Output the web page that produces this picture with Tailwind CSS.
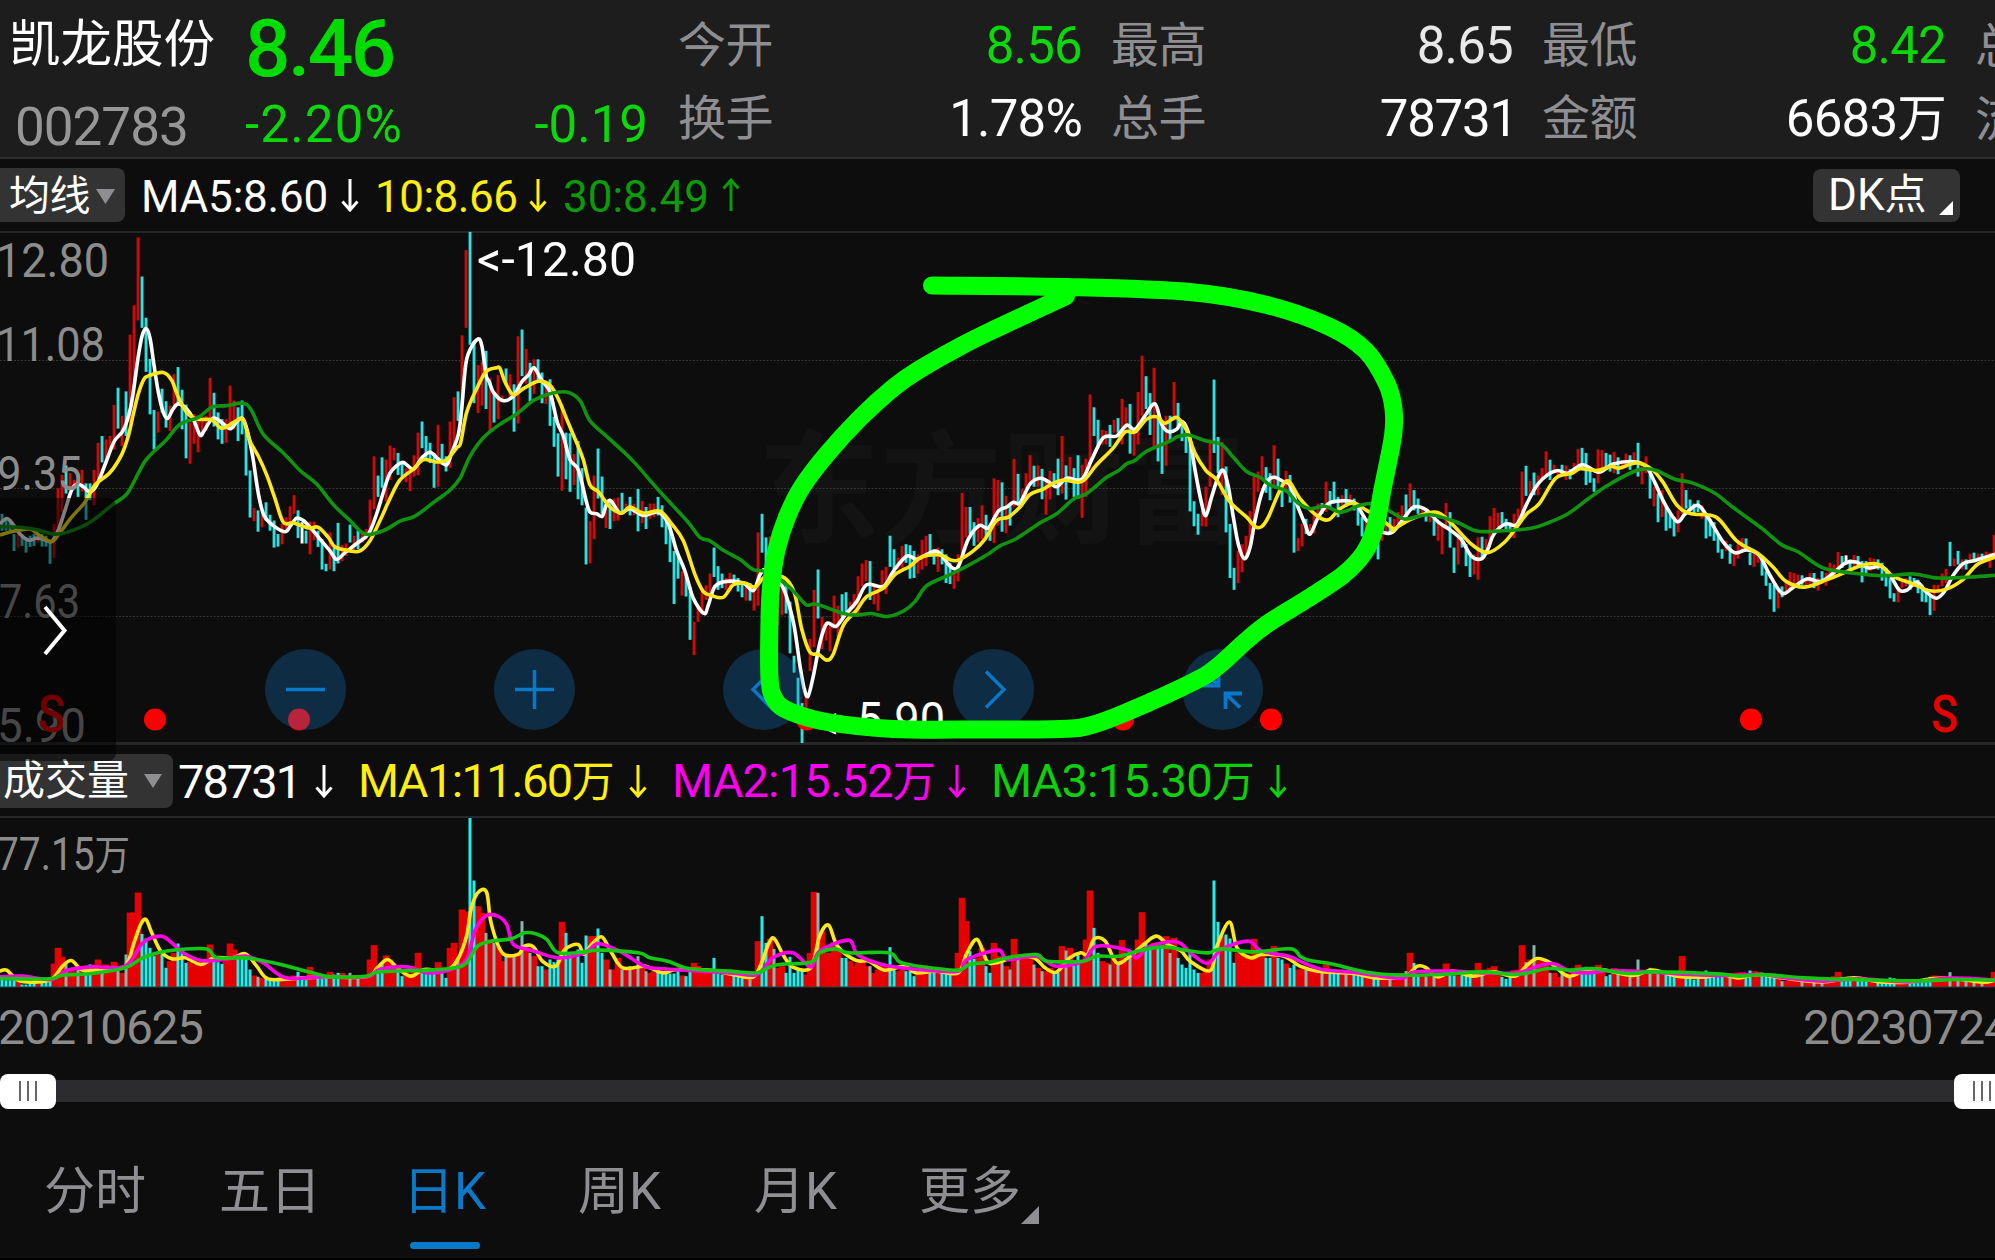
<!DOCTYPE html>
<html lang="zh-CN">
<head>
<meta charset="utf-8">
<title>凯龙股份 002783</title>
<script src="https://cdn.jsdelivr.net/npm/@tailwindcss/browser@4"></script>
</head>
<body class="w-[1995px] h-[1260px] overflow-hidden bg-[#0d0d0d] font-[Roboto,'Noto_Sans_CJK_SC',sans-serif] text-white">
<svg class="hidden">
  <symbol id="down" viewBox="0 0 18 34"><path d="M9 1V31M1.5 23.5L9 32L16.5 23.5" fill="none" stroke="currentColor" stroke-width="3"/></symbol>
  <symbol id="up" viewBox="0 0 18 34"><path d="M9 33V3M1.5 10.5L9 2L16.5 10.5" fill="none" stroke="currentColor" stroke-width="3"/></symbol>
</svg>
<div class="relative flex h-[1260px] w-[1995px] flex-col overflow-hidden border-b-2 border-black whitespace-nowrap">

  <!-- quote header -->
  <header class="flex h-[159px] shrink-0 overflow-hidden border-b-2 border-[#2e2e2e] bg-[#1d1d1d]">
    <div class="w-[676px] shrink-0">
      <div class="flex h-[90px] items-center">
        <div class="w-[245px] pl-[9px] text-[51.5px] leading-[92px]">凯龙股份</div>
        <div class="pt-[8px] text-[80px] font-medium leading-[82px] tracking-[-2.5px] text-[#00dc00]">8.46</div>
      </div>
      <div class="flex h-[68px] items-center text-[51px] leading-[68px]">
        <div class="w-[245px] pl-[15px] pt-[6px] text-[53px] tracking-[-1px] text-[#969696]">002783</div>
        <div class="w-[200px] pt-[2px] tracking-[1.2px] text-[#0bd80b]">-2.20%</div>
        <div class="w-[203px] pt-[2px] text-right text-[#0bd80b]">-0.19</div>
      </div>
    </div>
    <div class="grid h-[156px] shrink-0 grid-cols-[434px_431px_434px_200px] grid-rows-[88px_68px] text-[51px] tracking-[-0.8px]">
      <div class="flex justify-between pr-[28px] leading-[92px]"><span class="text-[48px] tracking-[-0.5px] text-[#8e8e93] pl-[2px]">今开</span><span class="text-[#0bd80b]">8.56</span></div>
      <div class="flex justify-between pr-[28px] leading-[92px]"><span class="text-[48px] tracking-[-0.5px] text-[#8e8e93] pl-[1px]">最高</span><span class="text-[#e8e8e8]">8.65</span></div>
      <div class="flex justify-between pr-[29px] leading-[92px]"><span class="text-[48px] tracking-[-0.5px] text-[#8e8e93] pl-[1px]">最低</span><span class="text-[#0bd80b]">8.42</span></div>
      <div class="leading-[92px]"><span class="text-[48px] tracking-[-0.5px] text-[#8e8e93]">总值</span></div>
      <div class="flex justify-between pr-[28px] leading-[62px]"><span class="text-[48px] tracking-[-0.5px] text-[#8e8e93] pl-[2px]">换手</span><span>1.78%</span></div>
      <div class="flex justify-between pr-[24px] leading-[62px]"><span class="text-[48px] tracking-[-0.5px] text-[#8e8e93] pl-[1px]">总手</span><span class="tracking-[-1.2px]">78731</span></div>
      <div class="flex justify-between pr-[29px] leading-[62px]"><span class="text-[48px] tracking-[-0.5px] text-[#8e8e93] pl-[1px]">金额</span><span>6683<span class="text-[49.5px]">万</span></span></div>
      <div class="leading-[62px]"><span class="text-[48px] tracking-[-0.5px] text-[#8e8e93]">流值</span></div>
    </div>
  </header>

  <!-- moving average bar -->
  <div class="flex h-[72px] shrink-0 items-center text-[44px] leading-[54px]">
    <div class="flex h-[54px] w-[125px] items-center gap-[6px] rounded-r-lg bg-[#333] pl-[9px] pt-[2px] text-[41px] tracking-[-0.5px]">均线
      <svg class="h-[15px] w-[19px]" viewBox="0 0 19 15"><path d="M0 0H19L9.500 15Z" fill="#8e8e93"/></svg></div>
    <div class="ml-[16px] w-[200px] pt-[3px] tracking-[-0.2px]">MA5:8.60</div><svg class="h-[34px] w-[18px]"><use href="#down"/></svg>
    <div class="ml-[16px] w-[154px] pt-[3px] tracking-[-0.5px] text-[#ffee10]">10:8.66</div><svg class="h-[34px] w-[18px] text-[#ffee10]"><use href="#down"/></svg>
    <div class="ml-[16px] w-[159px] pt-[3px] text-[#0a9a0a]">30:8.49</div><svg class="h-[34px] w-[18px] text-[#0a9a0a]"><use href="#up"/></svg>
    <div class="ml-auto mr-[35px] flex h-[53px] w-[147px] items-center rounded-lg bg-[#333] pl-[15px] text-[44px]">DK<span class="text-[42px]">点</span>
      <svg class="mt-[26px] ml-auto mr-[7px] h-[14px] w-[14px]" viewBox="0 0 14 14"><path d="M14 0V14H0Z" fill="#fff"/></svg></div>
  </div>

  <!-- price chart -->
  <div class="relative h-[512px] shrink-0">
    <svg id="price" class="block h-[512px] w-[1995px]" viewBox="0 231 1995 512">
      <text x="758" y="533" font-size="122" font-weight="700" fill="#131313" font-family="Noto Sans CJK SC">东方财富</text>
      <path d="M0 232H1995M0 743H1995" stroke="#262626" stroke-width="2"/>
      <path d="M0 360.500H1995M0 488.500H1995M0 616.500H1995" stroke="#363636" stroke-width="1" stroke-dasharray="2 1.500"/>
      <g id="candles"></g>
      <g id="averages" fill="none" stroke-width="3.600" stroke-linejoin="round"></g>
      <g font-family="Roboto" font-size="48">
        <g fill="#8c8c8c">
          <text x="-4" y="277" textLength="113" lengthAdjust="spacingAndGlyphs">12.80</text>
          <text x="-4" y="361" textLength="109" lengthAdjust="spacingAndGlyphs">11.08</text>
          <text x="-3" y="490" textLength="85" lengthAdjust="spacingAndGlyphs">9.35</text>
          <text x="-1" y="618" textLength="81" lengthAdjust="spacingAndGlyphs">7.63</text>
          <text x="-3" y="742" textLength="89" lengthAdjust="spacingAndGlyphs">5.90</text>
        </g>
        <g fill="#fff">
          <text x="477" y="275.500" textLength="159" lengthAdjust="spacingAndGlyphs">&lt;-12.80</text>
          <text y="736"><tspan x="815" dy="3">&lt;-</tspan><tspan x="857" dy="-3" textLength="88" lengthAdjust="spacingAndGlyphs">5.90</tspan></text>
        </g>
        <g fill="#e60000" font-size="51" font-weight="500">
          <text x="38" y="732" textLength="27" lengthAdjust="spacingAndGlyphs">S</text>
          <text x="1931" y="732" textLength="27" lengthAdjust="spacingAndGlyphs">S</text>
        </g>
      </g>
      <g fill="#f00"><circle cx="155" cy="719.500" r="11"/><circle cx="299" cy="719.500" r="11"/><circle cx="807" cy="719.500" r="11"/><circle cx="1123" cy="719.500" r="11"/><circle cx="1271" cy="719.500" r="11"/><circle cx="1751" cy="719.500" r="11"/></g>
    </svg>
    <div class="absolute top-[418px] left-[265px] flex gap-[148.2px] text-[#0a78c8]">
      <button class="size-[81px] rounded-full bg-[#1076c4]/30"><svg viewBox="0 0 81 81" fill="none" stroke="currentColor" stroke-width="3.500"><path d="M21 40.500H60"/></svg></button>
      <button class="size-[81px] rounded-full bg-[#1076c4]/30"><svg viewBox="0 0 81 81" fill="none" stroke="currentColor" stroke-width="3.500"><path d="M21 40.500H60M40.500 21V60"/></svg></button>
      <button class="size-[81px] rounded-full bg-[#1076c4]/30"><svg viewBox="0 0 81 81" fill="none" stroke="currentColor" stroke-width="3.500"><path d="M48 22.500L30 40.500L48 58.500"/></svg></button>
      <button class="size-[81px] rounded-full bg-[#1076c4]/30"><svg viewBox="0 0 81 81" fill="none" stroke="currentColor" stroke-width="3.500"><path d="M33 22.500L51 40.500L33 58.500"/></svg></button>
      <button class="size-[81px] rounded-full bg-[#1076c4]/30"><svg viewBox="0 0 81 81" fill="none" stroke="currentColor" stroke-width="3.800"><path d="M21 36.500H36.500V21M36.500 36.500L21 21M60 44.500H43.500V60M43.500 44.500L58 58.500"/></svg></button>
    </div>
    <svg class="absolute inset-0 h-[512px] w-[1995px]" viewBox="0 231 1995 512"><path id="marker" fill="none" stroke="#0f0" stroke-width="18" stroke-linecap="round" stroke-linejoin="round"/></svg>
  </div>

  <!-- volume header -->
  <div class="flex h-[75px] shrink-0 items-center border-y-2 border-[#262626] text-[47px] leading-[54px]">
    <div class="flex h-[54px] w-[173px] items-center gap-[15px] rounded-r-lg bg-[#333] pl-[3px] text-[42px]">成交量
      <svg class="h-[14px] w-[18px]" viewBox="0 0 18 14"><path d="M0 0H18L9 14Z" fill="#8e8e93"/></svg></div>
    <div class="ml-[5px] w-[137px] pt-[2px] tracking-[-2px]">78731</div><svg class="h-[34px] w-[18px]"><use href="#down"/></svg>
    <div class="ml-[25px] w-[271px] pt-[2px] tracking-[-1.6px] text-[#ffee10]">MA1:11.60<span class="text-[43px]">万</span></div><svg class="h-[34px] w-[18px] text-[#ffee10]"><use href="#down"/></svg>
    <div class="ml-[25px] w-[276px] pt-[2px] tracking-[-0.8px] text-[#ff00f0]">MA2:15.52<span class="text-[43px]">万</span></div><svg class="h-[34px] w-[18px] text-[#ff00f0]"><use href="#down"/></svg>
    <div class="ml-[25px] w-[278px] pt-[2px] tracking-[-0.8px] text-[#0bd00b]">MA3:15.30<span class="text-[43px]">万</span></div><svg class="h-[34px] w-[18px] text-[#0bd00b]"><use href="#down"/></svg>
  </div>

  <!-- volume chart -->
  <svg class="block h-[171px] w-[1995px] shrink-0" viewBox="0 818.500 1995 171">
    <path d="M0 987H1995" stroke="#0f4a4a" stroke-width="2"/>
    <g id="volumes"></g>
    <g id="volumeAverages" fill="none" stroke-width="3.600" stroke-linejoin="round"></g>
    <text x="-3" y="870" font-family="Roboto, Noto Sans CJK SC" font-size="46" fill="#8c8c8c" textLength="133" lengthAdjust="spacingAndGlyphs">77.15<tspan font-size="42">万</tspan></text>
  </svg>

  <!-- date range -->
  <div class="flex h-[84px] shrink-0 justify-between text-[48px] leading-[77px] tracking-[-1.4px] text-[#8c8c8c]">
    <span class="-ml-[2px]">20210625</span><span class="-mr-[15px] tracking-[-1.1px]">20230724</span>
  </div>
  <div class="flex h-[36px] shrink-0 items-center">
    <div class="flex h-[35px] w-[56px] shrink-0 items-center justify-center gap-[6px] rounded-lg bg-white"><i class="h-[20px] w-[2px] bg-[#666]"></i><i class="h-[20px] w-[2px] bg-[#666]"></i><i class="h-[20px] w-[2px] bg-[#666]"></i></div>
    <div class="h-[22px] w-[1898px] shrink-0 bg-[#2c2c2e]"></div>
    <div class="flex h-[35px] w-[56px] shrink-0 items-center justify-center gap-[6px] rounded-lg bg-white"><i class="h-[20px] w-[2px] bg-[#666]"></i><i class="h-[20px] w-[2px] bg-[#666]"></i><i class="h-[20px] w-[2px] bg-[#666]"></i></div>
  </div>

  <!-- period tabs -->
  <nav class="flex h-[149px] shrink-0 pl-[44px] text-[51px] leading-[165px] text-[#8e8e93]">
    <span class="w-[175px]">分时</span>
    <span class="w-[184px]">五日</span>
    <span class="relative w-[175px] text-[#0a7ac8]">日K<i class="absolute top-[133px] left-[7px] h-[7px] w-[70px] rounded-full bg-[#0a7ac8]"></i></span>
    <span class="w-[176px]">周K</span>
    <span class="w-[165px]">月K</span>
    <span class="flex">更多<svg class="mt-[97px] h-[18px] w-[18px]" viewBox="0 0 18 18"><path d="M18 0V18H0Z" fill="#8e8e93"/></svg></span>
  </nav>

  <!-- drawer handle -->
  <div class="absolute top-[498px] left-0 h-[263px] w-[116px] rounded-r-lg bg-black/50">
    <svg class="h-full w-full" viewBox="0 498 116 263"><path d="M45 607L64.500 630.500L45 654" fill="none" stroke="#fff" stroke-width="4"/></svg>
  </div>
</div>

<script>
// One entry per trading day: colour code, then high and low in chart units.
const DAYS = `c870-920 c885-920 c885-925 c930-980 r930-970 c930-965 c940-985 c935-968 c930-965 r935-955 c930-967 c935-967 c955-1018 r900-1000 r795-925 r755-865 c727-810 r750-800 r770-800 c765-820 r740-805 c780-888 c780-830 r740-845 r660-780 c640-718 r650-720 r640-690 r548-680 c497-618 r580-670 c508-640 r340-600 r253-520 r52-298 c168-320 c290-450 c412-576 c563-680 r568-630
c500-570 c537-615 r550-625 r457-550 c436-540 c503-620 c547-706 r600-722 r575-663 r580-688 r590-640 r580-625 r468-590 c512-612 c570-650 c590-663 r590-660 r491-615 r535-620 c555-655 c535-635 c610-757 c742-881 r853-892 c860-923 r870-910 c836-890 c873-920 c890-970 c930-967 r900-960 r880-915 r848-900 r815-870 c860-942 w895-958 c920-958 r893-990 r893-948 c920-968
c945-1035 c1018-1040 r925-1035 c970-1040 c897-1017 r962-1010 r958-995 c902-955 r935-985 c920-975 r925-955 r915-945 r828-930 r700-857 c757-820 c703-793 r710-833 r668-770 r675-712 c690-755 c720-760 r735-777 r735-803 r697-760 r630-756 c597-676 c640-710 c660-720 c690-793 r607-790 c663-725 c700-745 r597-735 r525-690 c508-595 r342-560 r90-320 c36-370 c360-543 r430-572
r420-550 c388-560 r468-625 c510-600 r460-590 r520-540 c440-490 r457-530 c487-627 r345-603 c325-463 r382-485 c423-537 r413-515 c413-480 c452-543 r475-545 c472-610 c583-672 c632-760 r545-802 c630-768 c632-805 r693-785 c655-827 c735-845 c852-1020 r892-1017 r757-945 c677-825 c760-870 r830-912 c832-915 r825-892 r822-890 c808-870 r840-865 c820-875 r840-875 c797-922
r832-898 c850-915 r840-885 r840-880 c820-875 c845-910 c880-960 c910-1013 c980-1137 c990-1062 r1040-1112 c1050-1115 c1085-1243 r1190-1288 r1145-1190 r1090-1165 r1082-1125 r1047-1110 c970-1057 c1025-1095 c1047-1090 r1060-1095 r1045-1100 c1050-1080 c1060-1100 c1075-1117 r1075-1127 c1075-1127 r1080-1157 r925-1142 c870-985 c940-1050 r937-1060 c1000-1090 r1090-1200 r1080-1170 c1075-1165 c1130-1283 c1290-1340 c1355-1440
c1430-1552 r1405-1480 r1240-1335 r1095-1265 c1035-1180 r1175-1270 r1190-1245 r1190-1277 r1112-1210 r1142-1235 c1108-1175 c1102-1165 r1130-1170 r1108-1150 r1055-1175 r1017-1085 r1007-1070 c1010-1125 r1085-1138 r1095-1157 r1037-1090 r1027-1107 c935-1027 c975-1045 r1000-1035 r965-1030 c960-1015 c963-1062 c980-1060 r990-1047 r947-1035 r935-1025 c930-995 c975-1020 r970-1042 c975-1020 c990-1075 c1015-1078 r1040-1092 r990-1070
r808-995 r850-940 c850-930 c895-965 r883-955 r845-945 c873-940 c910-950 r765-957 r770-905 c777-923 r817-928 c840-905 r708-850 c752-840 r797-850 r750-825 r697-785 c728-790 r727-790 c737-827 r775-873 r743-827 c750-790 c707-815 r640-810 c727-828 r702-770 c735-820 c697-825 r725-882 r707-820 r517-735 c555-640 c592-675 r622-665 r625-665 c607-672 r592-630 c587-630
r530-665 r555-620 c545-692 r625-698 r510-665 r402-580 c463-560 c513-637 r438-672 c580-715 c595-752 r580-728 c580-655 r480-595 c542-620 c595-655 c630-690 c650-863 c833-907 c870-932 r860-907 r790-908 r650-790 c473-690 c643-750 r657-815 c730-925 c900-1060 c1030-1095 r980-1075 r960-1043 r935-1000 r862-970 r755-905 r745-805 r700-770 c732-808 c750-830 r667-795 c707-790
c780-850 r743-800 c755-837 c815-985 r942-980 r900-967 c885-930 r900-935 r865-928 r840-880 c838-870 r775-865 c803-850 c775-840 c820-880 r815-845 c797-850 r813-845 c825-860 c850-905 c880-937 r890-920 r890-930 c920-970 c960-1005 r920-950 r900-930 c880-925 r885-910 r865-900 r845-890 c813-880 r780-850 c800-860 c825-870 r850-880 c860-893 r865-895 c885-935 r890-950
r905-990 r838-915 c865-970 c970-1045 r940-1020 c940-970 c960-1025 c985-1057 r990-1050 r940-1065 c938-1000 r945-990 r877-960 r853-930 r867-910 c865-900 c885-915 c895-925 r870-942 r855-900 r745-870 c728-817 r773-820 c748-815 r757-815 r735-775 r685-765 c710-770 r725-750 r740-760 c725-755 r727-770 c738-768 r720-750 r678-740 c675-735 c690-785 c740-778 c765-805 r680-780
r682-745 c690-740 c695-745 r687-750 c703-753 r712-740 r692-735 c697-740 r688-725 c660-760 r720-783 r700-750 c740-825 r790-848 c810-895 r800-880 c850-920 c870-913 c880-937 r860-925 r750-870 c800-855 c828-860 c840-870 c830-865 r845-885 c870-943 c885-937 c895-950 c930-985 c975-1003 r950-980 c960-1018 r980-1025 r960-1003 r942-985 c943-975 c985-1022 r985-1027 r985-1015
c995-1053 c1040-1083 c1075-1123 c1080-1160 r1090-1150 c1085-1117 r1075-1105 r1042-1095 r1045-1085 r1050-1075 c1052-1080 r1060-1085 r1045-1080 c1045-1090 r1060-1097 c1040-1075 r1045-1083 r1015-1060 r1020-1055 r983-1035 c995-1030 w993-1020 c1005-1035 r992-1030 c995-1030 c1010-1073 c1010-1050 r1000-1040 r1003-1035 c1005-1035 c1015-1068 c1030-1085 c1060-1120 c1105-1130 r1085-1132 r1065-1090 r1060-1085 c1055-1095 c1060-1085 c1065-1105
c1080-1130 c1090-1132 c1110-1170 r1080-1157 r1080-1105 r1047-1085 r1033-1075 c953-1025 r1003-1025 c980-1020 r1005-1035 c1005-1035 r988-1015 c985-1012 r988-1008 c988-1010 r982-1005 r985-1030 r932-1005`.trim().split(/\s+/);

// Volume bar tops; "@n" jumps to day n and the gap is interpolated.
const VOLUMES = `720 722 722 722 715 735 735 725 715 715 728 728 725 672 625 652 672 690 695 690 685 690 675 675 660 680 675 680 667 690 700 645 519 519 459 583 597 625 650 645 645 685 665 640 612 640 670 667 675 675 665 660 615 660 668 673 655 612 630 650 645 645 690 708 712 715 710 718 722 715 715 715 712 708 697 710 722 682 710 718 718 710 697 705 700 700 712 700 708 712 712 710 660 617 680 672 648 660 680 680 710 690 705 680 640 695 700 702 700 668 695 715 625 610 660 510 516 235 423 500 520 580 600 610 620 665 650 645 648 640 545 630 640 650 680 680 690 660 668 660 547 580 640 655 630 670 588 590 590 567 640 660 690 690 655 690 685 680 690 650 680 695 700 695 695 700 700 702 702 690 708 710 690 670 680 690 695 690 655 695 705 705 700 700 708 710 715 720 700 605 530 610 598 628 685 680 700 652 700 685 690 705 640 457 460 575 640 640 608 630 655 655 665 680 670 665 680 680 700 690 680 680 623 685 695 690 695 695 710 700 690 690 695 700 700 700 700 700 695 640 475 545 635 658 655 625 680 700 610 650 665 680 690 598 655 660 655 650 675 685 695 695 685 695 700 620 633 625 670 645 665 600 453 565 640 665 670 675 655 670 602 665 632 650 600 518 610 620 610 620 625 590 640 595 655 675 685 640 690 700 700 690 660 423 547 590 585 597 670 640 640 645 650 598 650 645 655 655 620 655 660 672 685 675 690 688 690 692 695 695 690 675 695 700 700 700 705
@338 705 @340 710 @345 720 @348 720 @350 700 695 640 670 705 710 710 712 705 705 700 672 705 708 @368 705 670 705 690 685 680 700 712 718 705 692 690 617 668 660 617 665 665 665 700 700 712 700 700 715 685 676 700 682 685 690 676 690 710 705 686 700 @408 705 660 695 695 685 695 700 @418 705 710 650 708 718 720 705 705 693 700 @430 705 @435 698 710 693 695 @443 705 @445 725 @450 722 @455 720 @458 710 697 712 @464 715 @470 725 @472 714 @475 720 @478 725 @482 712 708 @486 711 698 712 @493 725 @496 725 718 697`;

// Each curve is a list of segments: origin x, horizontal scale, points.
const WHITE = [[0,3,'0,900 20,884 38,900 60,930 85,948 110,942 130,945 155,952 175,918 195,860 215,800 232,782 250,790 270,805 290,785 315,725 342,657 365,630 378,605 392,555 402,495 414,410 426,345 438,322 450,350 462,430 475,510 490,570 503,588 518,562 535,545 560,560 580,590 600,637 612,625 635,590 655,592 690,618 710,598 728,588 742,625 758,700 775,810 792,875 820,905 855,923 872,905 890,883 910,890 935,915 960,945 990,980 1010,1005 1035,985 1070,958 1105,930 1130,870 1155,790 1170,750 1190,728 1210,718 1240,738 1265,705 1290,688 1315,708 1340,725 1355,690 1375,635 1385,560 1397,430 1410,385 1434,353 1446,375 1458,460'],
[450,3,'118,480 130,510 158,535 190,522 215,480 235,460 252,438 275,475 300,510 322,600 340,640 360,710 385,740 408,830 420,865 440,870 457,877 470,840 483,832 510,868 540,855 580,875 625,865 655,900 680,980 705,1040 730,1120 762,1165 775,1140 795,1085 830,1070 880,1075 910,1097 930,1050 945,1035 970,1050 1000,1090 1030,1190 1050,1320 1062,1385 1074,1410 1090,1350 1110,1250 1130,1195 1158,1203 1185,1170 1220,1130 1250,1080 1300,1085 1330,1040 1370,995 1400,1005 1430,990 1463,982 1500,1025'],
[900,3,'168,1033 180,1015 205,945 238,905 265,912 295,862 320,850 340,836 360,838 390,782 420,765 445,775 470,790 500,765 545,768 575,710 610,645 650,640 680,608 705,620 735,580 765,545 785,605 805,627 830,620 848,598 868,640 885,740 905,840 918,875 935,820 955,760 970,742 985,790 1000,880 1015,960 1033,1003 1050,970 1065,890 1085,810 1105,770 1125,762 1150,775 1170,785 1190,840 1215,900 1230,930 1255,880 1285,840 1320,832 1365,838 1400,890 1440,915'],
[1350,2.431,'80,925 103,925 130,885 155,850 185,858 215,895 240,915 270,945 295,995 320,1003 335,975 350,930 378,900 405,902 430,840 455,785 480,755 505,742 530,750 565,725 605,747 640,723 690,716 720,730 740,775 765,840 795,893 815,870 845,845 870,880 905,950 935,985 965,977 995,993 1020,1050 1050,1105 1075,1090 1110,1063 1145,1070 1180,1040 1205,1015 1230,1013 1260,1030 1290,1025 1310,1045 1335,1095 1355,1095 1378,1072 1400,1100 1425,1120 1445,1100 1465,1055 1490,1018 1520,1008 1568,990']];
const YELLOW = [[0,3,'0,933 40,922 90,915 120,935 155,952 180,925 215,880 255,835 285,785 330,748 365,695 385,640 400,575 415,515 430,475 445,462 490,452 515,475 535,525 560,570 590,590 635,592 665,617 700,600 728,590 750,655 775,700 800,755 825,825 850,895 880,897 925,912 955,910 985,940 1005,968 1050,980 1080,980 1110,950 1140,890 1170,825 1200,770 1240,738 1270,710 1310,717 1340,710 1370,675 1382,660 1400,570 1430,500 1458,450 1490,438'],
[450,3,'150,440 165,480 190,518 220,500 265,478 300,490 325,530 350,590 380,660 400,710 420,785 445,805 480,850 515,868 540,850 580,868 630,862 665,900 700,950 735,1050 760,1100 785,1112 820,1117 850,1080 885,1075 915,1087 940,1060 970,1050 1010,1065 1035,1110 1055,1210 1080,1280 1105,1285 1130,1303 1150,1285 1180,1200 1220,1155 1250,1115 1300,1090 1335,1050 1380,1025 1415,998 1470,992 1500,1006'],
[900,3,'175,1007 220,980 255,945 290,890 325,880 360,850 390,813 430,797 455,782 490,770 545,775 590,725 640,675 675,628 705,628 740,590 770,583 795,602 830,585 858,620 885,690 918,742 950,770 990,835 1040,880 1065,908 1085,908 1105,880 1140,800 1165,773 1200,825 1250,875 1285,888 1320,855 1360,838 1400,860 1440,885 1480,915'],
[1350,2.431,'105,917 150,885 205,865 240,890 295,960 335,985 375,955 405,910 430,870 460,840 500,765 540,750 560,737 600,742 635,730 655,735 695,720 730,735 760,775 795,845 830,870 890,880 940,950 995,990 1030,1030 1060,1070 1105,1087 1160,1065 1200,1045 1245,1022 1285,1020 1320,1055 1370,1078 1410,1098 1450,1093 1490,1065 1525,1020 1568,998']];
const GREEN = [[0,3,'0,908 60,910 110,917 160,930 200,925 270,895 335,845 380,812 415,750 440,708 500,650 540,605 595,585 635,555 680,550 730,543 755,565 790,635 850,690 900,742 950,782 1000,843 1050,890 1095,930 1150,920 1200,892 1245,877 1300,837 1350,800 1380,765 1410,700 1450,645 1500,605'],
[450,3,'200,575 250,535 300,515 350,510 390,535 420,595 480,650 550,715 630,805 710,890 750,940 780,950 820,978 870,1005 910,1035 950,1042 1010,1080 1045,1115 1070,1140 1100,1138 1180,1165 1220,1170 1265,1165 1310,1174 1360,1158 1395,1130 1430,1083 1500,1050'],
[900,3,'195,1028 260,992 300,965 350,943 420,897 470,870 520,827 560,810 620,762 655,743 680,722 705,712 740,685 810,655 830,643 865,637 920,655 965,665 1000,703 1040,745 1080,762 1110,785 1160,803 1190,835 1230,855 1275,848 1325,865 1380,845 1430,842 1500,880'],
[1350,2.431,'140,885 195,873 260,895 305,920 350,922 440,913 485,895 530,870 580,825 625,787 690,745 720,737 745,742 790,768 830,778 885,808 930,850 1000,912 1050,962 1090,983 1150,1030 1220,1045 1300,1053 1370,1048 1430,1060 1510,1057 1568,1052']];
const V1 = [[0,2.24,'0,695 15,692 40,722 75,728 115,720 140,680 160,663 185,692 225,690 280,680 300,610 315,555 327,540 340,580 360,635 385,658 415,655 450,675 480,655 520,655 550,643 575,680 600,718 650,718 720,712 820,712 845,685 868,660 890,685 920,710 950,690 1000,692 1025,660 1045,590 1055,510 1070,460 1090,458 1100,550 1125,640 1160,645 1175,620 1195,622 1215,665 1245,680 1265,630 1295,615 1308,645 1325,615 1348,592 1370,640 1395,685 1440,680'],
[650,2.24,'0,685 30,700 60,690 130,692 185,705 230,713 250,670 265,615 278,597 300,650 320,683 360,685 380,590 400,557 420,620 460,662 490,665 525,692 570,680 595,700 640,695 690,700 710,640 733,600 755,665 775,670 820,652 860,655 885,685 910,698 940,655 965,640 980,645 995,598 1020,605 1045,670 1075,650 1110,610 1135,590 1160,615 1190,635 1210,665 1255,693 1270,620 1298,548 1315,625 1345,655 1370,645 1420,650'],
[1300,2.256,'0,680 40,695 120,702 170,715 235,712 265,680 285,685 310,712 345,695 390,710 435,697 485,710 510,680 535,657 565,670 605,710 640,695 680,690 750,708 795,692 850,710 910,713 950,705 990,715 1030,705 1085,715 1175,727 1250,715 1310,727 1380,727 1430,717 1480,718 1540,728 1568,722']];
const V2 = [[0,2.24,'0,712 50,710 115,720 150,692 205,682 280,680 320,610 360,590 385,610 410,640 450,663 500,660 550,650 590,670 640,715 720,712 820,712 850,690 910,682 960,700 1010,690 1045,660 1065,570 1090,528 1115,530 1135,555 1150,615 1190,632 1250,655 1310,640 1340,612 1390,637 1430,670'],
[650,2.24,'0,685 80,692 180,700 240,705 275,655 320,640 360,682 380,635 445,602 465,645 520,675 600,690 690,695 710,660 780,632 800,660 865,650 910,680 970,665 1000,620 1070,632 1090,655 1120,620 1180,607 1215,645 1250,672 1280,630 1340,605 1370,635 1430,650'],
[1300,2.256,'0,665 50,690 120,698 170,708 230,716 260,697 340,695 410,700 490,700 530,683 570,672 610,695 650,700 700,693 800,698 880,705 960,708 1040,705 1100,716 1180,725 1260,718 1370,727 1470,716 1568,722']];
const V3 = [[0,2.24,'0,717 110,718 140,707 200,703 280,685 320,655 370,635 460,628 485,655 550,655 620,672 700,700 740,712 820,710 850,697 960,692 1020,685 1045,670 1070,620 1100,605 1145,598 1175,580 1200,583 1225,600 1250,640 1310,637 1340,632 1430,640'],
[650,2.24,'0,655 40,665 90,688 180,695 240,700 280,677 360,668 380,640 415,628 445,640 535,640 560,668 610,682 690,692 715,675 760,668 800,655 865,645 890,665 970,665 1000,650 1050,650 1100,632 1150,622 1200,632 1250,640 1280,628 1350,637 1435,628'],
[1300,2.256,'0,650 20,662 70,673 150,698 230,707 320,705 410,697 490,705 560,687 610,692 660,687 740,702 800,697 940,703 990,710 1050,706 1150,716 1300,722 1400,724 1480,720 1568,722']];
// Freehand highlight, in page pixels.
const MARKER = [[0,1,'932,285.500 1067,287 1190,292 1267,305 1330,327 1366,351 1387,384 1393.500,409 1393,436 1383,487 1375,528 1364,553 1343,575 1307,599 1270,622 1247,640 1217,667 1193,682 1127,712 1090,725.500 1060,729 980,729.500 893,729 827,722 790,711.500 775,700 769.500,678 769.500,620 771,587 776.500,550 787,517 802,487 827,454 860,418 893,388 917,371 960,346.500 993,330 1066,296']];

const points = (segs, y0, ky) => segs.flatMap(([x0, kx, s]) => s.split(' ').map(p => {
  const [x, y] = p.split(',').map(Number);
  return [x0 + x / kx, y0 + y / ky];
}));
function smooth(p, t = 6) {
  let d = `M${p[0]}`;
  for (let i = 0; i < p.length - 1; i++) {
    const a = p[i - 1] || p[i], b = p[i], c = p[i + 1], e = p[i + 2] || c;
    d += `C${b[0] + (c[0] - a[0]) / t} ${b[1] + (c[1] - a[1]) / t} ${c[0] - (e[0] - b[0]) / t} ${c[1] - (e[1] - b[1]) / t} ${c[0]} ${c[1]}`;
  }
  return d;
}
const byId = id => document.getElementById(id);
const KY = 1568 / 530;
const colours = { r: '#d20808', c: '#2be2e0', w: '#ffffff' };
byId('candles').innerHTML = DAYS.map((d, i) => {
  const [hi, lo] = d.slice(1).split('-').map(v => 219.7 + v / KY);
  return `<rect x="${4 * i + 0.6}" y="${hi}" width="2.900" height="${lo - hi}" fill="${colours[d[0]]}"/>`;
}).join('');
const line = (segs, colour, y0, ky) => `<path d="${smooth(points(segs, y0, ky))}" stroke="${colour}"/>`;
byId('averages').innerHTML = line(WHITE, '#fff', 219.7, KY) + line(YELLOW, '#ffe81a', 219.7, KY) + line(GREEN, '#109410', 219.7, KY);
byId('marker').setAttribute('d', smooth(points(MARKER, 0, 1)));

const tops = [];
let next = 0, last = -1;
for (const token of VOLUMES.split(/\s+/)) {
  if (token[0] === '@') { next = +token.slice(1); continue; }
  const v = +token;
  for (let j = last + 1; j < next; j++) tops[j] = tops[last] + (v - tops[last]) * (j - last) / (next - last);
  tops[next] = v; last = next; next++;
}
const isRed = i => DAYS[i] && DAYS[i][0] === 'r';
let reds = '', cyans = '';
tops.forEach((v, i) => {
  const y = 740 + v / 3, h = 987 - y, x = 4 * i + 2;
  if (isRed(i)) reds += `<rect x="${x - 3.3}" y="${y}" width="6.600" height="${h}" fill="#e60000"/>`;
  else cyans += `<rect x="${x - 1.5}" y="${y}" width="3" height="${h}" fill="${isRed(i - 1) && isRed(i + 1) ? '#86b4b0' : '#22eeec'}"/>`;
});
byId('volumes').innerHTML = reds + cyans;
byId('volumeAverages').innerHTML = line(V1, '#ffe81a', 740, 3) + line(V2, '#ff00e6', 740, 3) + line(V3, '#12c812', 740, 3);
</script>
</body>
</html>
